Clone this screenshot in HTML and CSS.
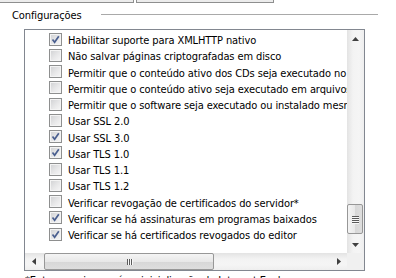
FILE: index.html
```html
<!DOCTYPE html>
<html lang="pt-BR">
<head>
<meta charset="utf-8">
<title>Configurações</title>
<link rel="stylesheet" href="styles.css">
</head>
<body>
<div class="tabs">
  <div class="tab tab-first"></div>
  <div class="tab tab-second"></div>
</div>
<div class="group">
  <span class="group-label">Configurações</span>
  <span class="group-line"></span>
</div>
<div class="listbox">
  <div class="viewport">
    <ul class="items">
      <li class="item"><span class="cb checked"><svg viewBox="0 0 11 11"><path d="M2.5 5.5 L4.6 8.2 L8.8 2.2"/></svg></span><span class="label">Habilitar suporte para XMLHTTP nativo</span></li>
      <li class="item"><span class="cb"></span><span class="label">Não salvar páginas criptografadas em disco</span></li>
      <li class="item"><span class="cb"></span><span class="label">Permitir que o conteúdo ativo dos CDs seja executado no computador</span></li>
      <li class="item"><span class="cb"></span><span class="label">Permitir que o conteúdo ativo seja executado em arquivos do computador</span></li>
      <li class="item"><span class="cb"></span><span class="label">Permitir que o software seja executado ou instalado mesmo se a assinatura for inválida</span></li>
      <li class="item"><span class="cb"></span><span class="label">Usar SSL 2.0</span></li>
      <li class="item"><span class="cb checked"><svg viewBox="0 0 11 11"><path d="M2.5 5.5 L4.6 8.2 L8.8 2.2"/></svg></span><span class="label">Usar SSL 3.0</span></li>
      <li class="item"><span class="cb checked"><svg viewBox="0 0 11 11"><path d="M2.5 5.5 L4.6 8.2 L8.8 2.2"/></svg></span><span class="label">Usar TLS 1.0</span></li>
      <li class="item"><span class="cb"></span><span class="label">Usar TLS 1.1</span></li>
      <li class="item"><span class="cb"></span><span class="label">Usar TLS 1.2</span></li>
      <li class="item"><span class="cb"></span><span class="label">Verificar revogação de certificados do servidor*</span></li>
      <li class="item"><span class="cb checked"><svg viewBox="0 0 11 11"><path d="M2.5 5.5 L4.6 8.2 L8.8 2.2"/></svg></span><span class="label">Verificar se há assinaturas em programas baixados</span></li>
      <li class="item"><span class="cb checked"><svg viewBox="0 0 11 11"><path d="M2.5 5.5 L4.6 8.2 L8.8 2.2"/></svg></span><span class="label">Verificar se há certificados revogados do editor</span></li>
    </ul>
  </div>
  <div class="vscroll">
    <div class="sb-btn"><svg class="arrow" viewBox="0 0 7 4"><polygon points="0,4 7,4 3.5,0"/></svg></div>
    <div class="vtrack">
      <div class="vthumb"><span class="grip-h"></span><span class="grip-h"></span><span class="grip-h"></span><span class="grip-h"></span></div>
    </div>
    <div class="sb-btn"><svg class="arrow" viewBox="0 0 7 4"><polygon points="0,0 7,0 3.5,4"/></svg></div>
  </div>
  <div class="hscroll">
    <div class="sb-btn"><svg class="arrow-h" viewBox="0 0 4 7"><polygon points="4,0 4,7 0,3.5"/></svg></div>
    <div class="htrack">
      <div class="hthumb"><span class="grip-v"></span><span class="grip-v"></span><span class="grip-v"></span></div>
    </div>
    <div class="sb-btn"><svg class="arrow-h" viewBox="0 0 4 7"><polygon points="0,0 0,7 4,3.5"/></svg></div>
  </div>
  <div class="corner"></div>
</div>
<p class="note">*Entra em vigor após reinicialização do Internet Explorer</p>
</body>
</html>
```
FILE: styles.css
```css
* { box-sizing: border-box; }
html, body { margin: 0; padding: 0; background: #fff; }
body {
  width: 396px;
  height: 278px;
  overflow: hidden;
  font-family: "DejaVu Sans", "Liberation Sans", sans-serif;
  font-stretch: condensed;
  font-size: 11px;
  letter-spacing: -0.1px;
  color: #000;
}
.tabs { display: flex; gap: 2px; margin-left: -3px; height: 3px; }
.tab {
  height: 3px;
  border: 1px solid #8e8f8f;
  border-top: none;
  background: #ececec;
}
.tab-first { width: 137px; }
.tab-second { width: 138px; }
.group {
  display: flex;
  align-items: center;
  height: 20px;
  margin-top: 2px;
  padding-left: 12px;
}
.group-label { line-height: 13px; }
.group-line {
  width: 277px;
  height: 1px;
  margin-left: auto;
  margin-right: 18px;
  background: #a9a9a9;
  align-self: flex-start;
  margin-top: 9px;
}
.listbox {
  margin-left: 24px;
  margin-top: 4px;
  width: 341px;
  height: 242px;
  border: 1px solid #828790;
  display: grid;
  grid-template-columns: 1fr 17px;
  grid-template-rows: 1fr 17px;
}
.viewport { overflow: hidden; background: #fff; }
.items { list-style: none; margin: 0; padding: 1px 0 0 24px; }
.item {
  height: 16.25px;
  display: flex;
  align-items: center;
  white-space: nowrap;
}
.cb {
  flex: none;
  width: 13px;
  height: 13px;
  border: 1px solid #8e8f8f;
  background: linear-gradient(135deg, #cfd0d2 0%, #e8e8e9 55%, #f7f7f7 100%);
  box-shadow: inset 0 0 0 1px #f4f4f4;
  display: flex;
  align-items: center;
  justify-content: center;
}
.cb svg { width: 11px; height: 11px; }
.cb path { fill: none; stroke: #4a5f8f; stroke-width: 1.7; }
.label { margin-left: 6px; line-height: 13px; padding-top: 3px; }
.vscroll {
  display: flex;
  flex-direction: column;
  background: linear-gradient(to right, #e3e3e3, #f3f3f3 35%, #f5f5f5 70%, #eeeeee);
}
.sb-btn {
  flex: none;
  width: 17px;
  height: 17px;
  display: flex;
  align-items: center;
  justify-content: center;
}
.arrow { width: 7px; height: 4px; fill: #404040; }
.arrow-h { width: 4px; height: 7px; fill: #404040; }
.vtrack { flex: 1; }
.vthumb {
  margin-top: 157px;
  height: 30px;
  width: 16px;
  margin-left: 0;
  border: 1px solid #979797;
  border-radius: 2px;
  background: linear-gradient(to right, #f4f4f4, #e8e8e8 50%, #d7d7d7 51%, #dedede);
  display: flex;
  flex-direction: column;
  align-items: center;
  justify-content: center;
  gap: 1px;
}
.grip-h { width: 7px; height: 1px; background: #5a5a5a; box-shadow: 0 1px 0 #f8f8f8; }
.hscroll {
  display: flex;
  background: linear-gradient(to bottom, #e3e3e3, #f3f3f3 35%, #f5f5f5 70%, #eeeeee);
}
.htrack { flex: 1; display: flex; align-items: stretch; }
.hthumb {
  margin-left: 2px;
  width: 170px;
  border: 1px solid #979797;
  border-radius: 2px;
  background: linear-gradient(to bottom, #f4f4f4, #e8e8e8 50%, #d7d7d7 51%, #dedede);
  display: flex;
  align-items: center;
  justify-content: center;
  gap: 1px;
}
.grip-v { width: 1px; height: 6px; background: #5a5a5a; box-shadow: 1px 0 0 #f8f8f8; }
.corner { background: #f0f0f0; }
.note {
  margin: 3px 0 0 25px;
  line-height: 13px;
  white-space: nowrap;
}
```
